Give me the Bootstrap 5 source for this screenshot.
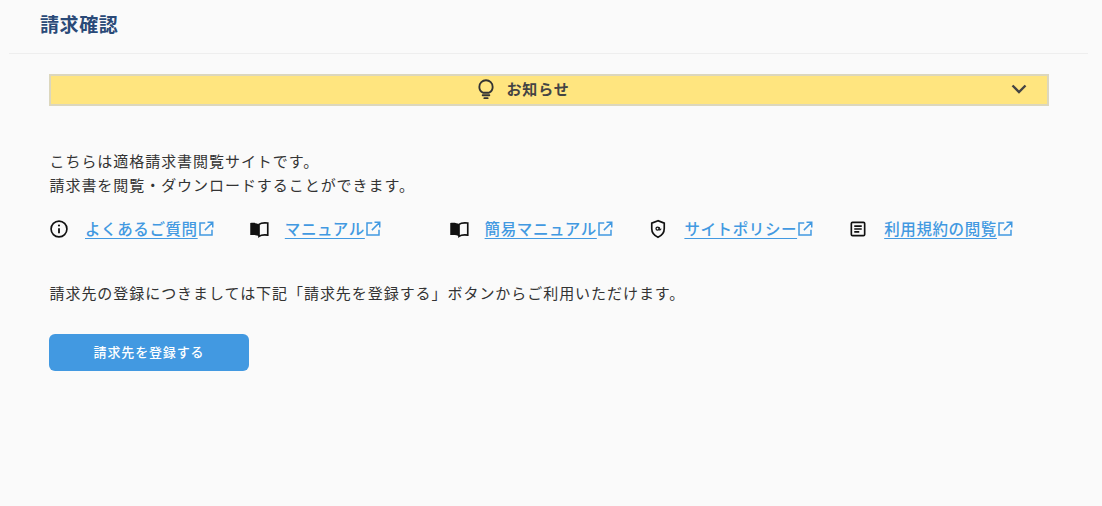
<!DOCTYPE html>
<html lang="ja">
<head>
  <meta charset="UTF-8" />
  <title>請求確認</title>
  <link rel="stylesheet" href="https://cdn.jsdelivr.net/npm/bootstrap@5.3.3/dist/css/bootstrap.min.css" />
  <style>
    html, body { height:100%; }
    body { background:#fafafa; color:#333; font-family:"Noto Sans CJK JP","Liberation Sans",sans-serif; font-size:15px; letter-spacing:.95px; overflow:hidden; }
    .page-head { margin:0 14px 0 9px; height:54px; padding:10px 0 0 31px; border-bottom:1px solid #eeeeee; }
    .page-title { font-size:19px; font-weight:700; letter-spacing:.6px; line-height:27px; color:#2a4a78; margin:0; }
    .page-body { padding:20px 0 0 49px; width:1049px; }
    .notice-bar { height:32px; padding:0 52px 2px 0; background:#ffe57f; border:2px solid #dcd7bd; color:#444; font-size:15px; font-weight:700; letter-spacing:.85px; }
    .notice-bar .lamp { margin-right:10px; }
    .notice-bar .chev { position:absolute; right:18px; top:5px; }
    .intro { margin:43px 0 0 .5px; line-height:24px; }
    .link-row { margin:20px 0 0 1px; }
    .link-cell { width:200px; height:24px; }
    .link-cell svg.ico { width:20px; height:20px; flex:none; margin:0 16px 0 -1px; }
    .doc-link { color:#4299e1; font-weight:500; line-height:24px; padding-bottom:2px; font-size:15.5px; letter-spacing:.6px; text-underline-offset:3px; }
    .doc-link svg { width:18px; height:18px; vertical-align:-3px; margin:0 -2px 0 -1px; }
    .reg-text { margin:40px 0 0 .5px; line-height:24px; }
    .reg-btn { width:200px; height:37px; margin:29px 0 0 0; padding:0 0 2px; background:#4299e1; border:0; border-radius:6px; color:#fff; font-size:13px; font-weight:500; letter-spacing:.85px; }
  </style>
</head>
<body>
  <div class="page-head">
    <h1 class="page-title">請求確認</h1>
  </div>
  <div class="page-body">
    <div class="notice-bar position-relative d-flex align-items-center justify-content-center">
      <svg class="lamp" width="20" height="22" viewBox="0 0 24 26" fill="none" stroke="#333" stroke-width="2.200"><path d="M8.500 17.500C6 16.200 4 13.700 4 10.500a8 8 0 0 1 16 0c0 3.200-2 5.700-4.500 7z"/><path d="M8 20.500h8M10 24h4" stroke-linecap="round"/></svg>
      <span>お知らせ</span>
      <svg class="chev" width="20" height="16" viewBox="0 0 20 16" fill="none" stroke="#444" stroke-width="2.400"><path d="M3.500 4.500 10 11l6.500-6.500"/></svg>
    </div>

    <div class="intro">
      <div>こちらは適格請求書閲覧サイトです。</div>
      <div>請求書を閲覧・ダウンロードすることができます。</div>
    </div>

    <div class="link-row d-flex">
      <div class="link-cell d-flex align-items-center">
        <svg class="ico" viewBox="0 0 24 24" fill="none" stroke="#111"><circle cx="12" cy="12" r="9.500" stroke-width="2"/><path d="M12 11v6" stroke-width="2.200"/><circle cx="12" cy="7.800" r="1.300" fill="#111" stroke="none"/></svg>
        <a class="doc-link" href="#">よくあるご質問<svg viewBox="0 0 24 24" fill="none" stroke="#4299e1" stroke-width="2"><path d="M11 4H4v16h16v-7M14 3h7v7M21 3 10.500 13.500"/></svg></a>
      </div>
      <div class="link-cell d-flex align-items-center">
        <svg class="ico" viewBox="0 0 24 24"><path d="M12 6.500C10 4.800 6 4.300 1.500 4.800v14.500c4.500-.5 8.500 0 10.500 1.500z" fill="#111"/><path d="M12 6.500c2-1.700 6-2.200 10.500-1.700v14.500c-4.500-.5-8.500 0-10.500 1.500z" fill="none" stroke="#111" stroke-width="2"/></svg>
        <a class="doc-link" href="#">マニュアル<svg viewBox="0 0 24 24" fill="none" stroke="#4299e1" stroke-width="2"><path d="M11 4H4v16h16v-7M14 3h7v7M21 3 10.500 13.500"/></svg></a>
      </div>
      <div class="link-cell d-flex align-items-center">
        <svg class="ico" viewBox="0 0 24 24"><path d="M12 6.500C10 4.800 6 4.300 1.500 4.800v14.500c4.500-.5 8.500 0 10.500 1.500z" fill="#111"/><path d="M12 6.500c2-1.700 6-2.200 10.500-1.700v14.500c-4.500-.5-8.500 0-10.500 1.500z" fill="none" stroke="#111" stroke-width="2"/></svg>
        <a class="doc-link" href="#">簡易マニュアル<svg viewBox="0 0 24 24" fill="none" stroke="#4299e1" stroke-width="2"><path d="M11 4H4v16h16v-7M14 3h7v7M21 3 10.500 13.500"/></svg></a>
      </div>
      <div class="link-cell d-flex align-items-center">
        <svg class="ico" viewBox="0 0 24 24" fill="none" stroke="#111" stroke-width="2"><path d="M12 2 4.500 5v6.500c0 4.800 3 8.500 7.500 10.500 4.500-2 7.500-5.700 7.500-10.500V5z"/><circle cx="11.500" cy="11.500" r="1.900" stroke-width="1.500"/><path d="M13.400 9.600v2.700c0 1.300 2.100 1.300 2.100-.8" stroke-width="1.300"/></svg>
        <a class="doc-link" href="#">サイトポリシー<svg viewBox="0 0 24 24" fill="none" stroke="#4299e1" stroke-width="2"><path d="M11 4H4v16h16v-7M14 3h7v7M21 3 10.500 13.500"/></svg></a>
      </div>
      <div class="link-cell d-flex align-items-center">
        <svg class="ico" viewBox="0 0 24 24" fill="none" stroke="#111" stroke-width="2"><rect x="4" y="4" width="16" height="16" rx="1.500"/><path d="M7.500 8.500h9M7.500 12h9M7.500 15.500h6"/></svg>
        <a class="doc-link" href="#">利用規約の閲覧<svg viewBox="0 0 24 24" fill="none" stroke="#4299e1" stroke-width="2"><path d="M11 4H4v16h16v-7M14 3h7v7M21 3 10.500 13.500"/></svg></a>
      </div>
    </div>

    <p class="reg-text mb-0">請求先の登録につきましては下記「請求先を登録する」ボタンからご利用いただけます。</p>
    <button type="button" class="btn reg-btn d-block">請求先を登録する</button>
  </div>
</body>
</html>
